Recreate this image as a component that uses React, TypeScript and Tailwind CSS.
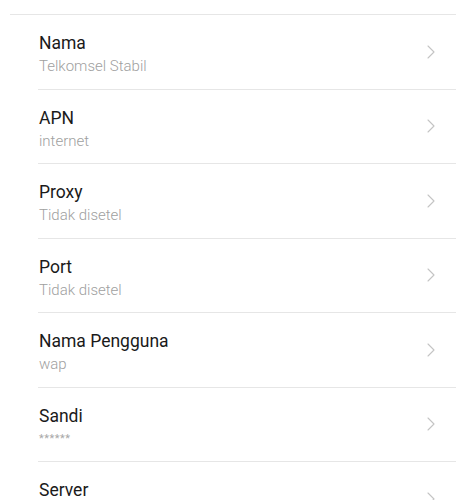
import React from 'react';

const items = [
  { title: 'Nama', value: 'Telkomsel Stabil' },
  { title: 'APN', value: 'internet' },
  { title: 'Proxy', value: 'Tidak disetel' },
  { title: 'Port', value: 'Tidak disetel' },
  { title: 'Nama Pengguna', value: 'wap' },
  { title: 'Sandi', value: '******' },
  { title: 'Server', value: 'Tidak disetel' },
];

function Chevron() {
  return (
    <svg width="10" height="14" viewBox="0 0 10 14" fill="none" className="shrink-0">
      <path d="M2 1l6 6-6 6" stroke="#c4c4c4" strokeWidth="1.1" strokeLinecap="round" strokeLinejoin="round" />
    </svg>
  );
}

export default function App() {
  return (
    <div className="h-[500px] w-[476px] overflow-hidden bg-white font-['Roboto',sans-serif]">
      <div className="ml-[10px] mr-[20px] mt-[14px] border-t border-[#e6e6e6]">
        <div className="ml-[28px]">
          {items.map((item) => (
            <div
              key={item.title}
              className="flex h-[74.5px] items-center justify-between border-b border-[#e6e6e6] pr-[20px]"
            >
              <div className="mt-[4px] flex flex-col pl-[1px]">
                <span className="text-[17.5px] leading-[22px] text-[#1a1a1a]">{item.title}</span>
                <span
                  className={
                    item.title === 'Sandi'
                      ? 'mt-[3px] text-[11px] leading-[18px] tracking-[0.5px] text-[#a8a8a8]'
                      : 'mt-[3px] text-[15px] font-light leading-[18px] text-[#a0a0a0]'
                  }
                >
                  {item.value}
                </span>
              </div>
              <Chevron />
            </div>
          ))}
        </div>
      </div>
    </div>
  );
}
